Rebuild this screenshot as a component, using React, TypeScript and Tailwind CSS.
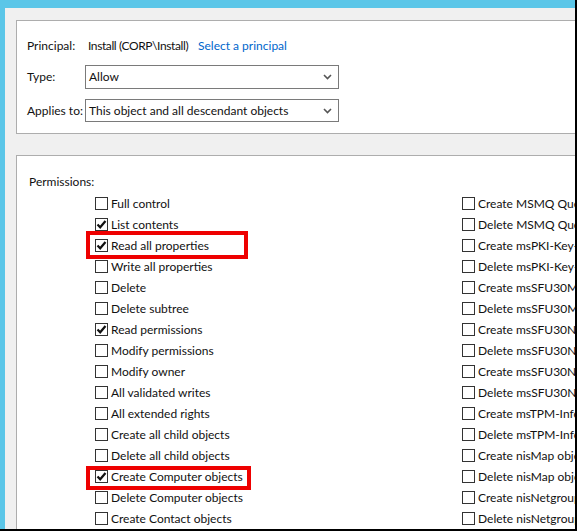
import React from "react";

const font = { fontFamily: 'Lato, "Noto Sans", sans-serif' };

function Check({ checked }: { checked?: boolean }) {
  return (
    <span className="w-[13px] h-[13px] border border-[#333333] bg-white flex items-center justify-center shrink-0">
      {checked && (
        <svg width="11" height="11" viewBox="0 0 11 11">
          <path d="M1.5 5.5 L4.2 8.3 L9.5 2" fill="none" stroke="#111" strokeWidth="2.2" />
        </svg>
      )}
    </span>
  );
}

function Chevron() {
  return (
    <svg width="9" height="6" viewBox="0 0 9 6" className="shrink-0">
      <path d="M1 1 L4.5 4.5 L8 1" fill="none" stroke="#555" strokeWidth="1.6" />
    </svg>
  );
}

const left: [string, boolean, string?][] = [
  ["Full control", false],
  ["List contents", true],
  ["Read all properties", true, "a"],
  ["Write all properties", false],
  ["Delete", false],
  ["Delete subtree", false],
  ["Read permissions", true],
  ["Modify permissions", false],
  ["Modify owner", false],
  ["All validated writes", false],
  ["All extended rights", false],
  ["Create all child objects", false],
  ["Delete all child objects", false],
  ["Create Computer objects", true, "b"],
  ["Delete Computer objects", false],
  ["Create Contact objects", false],
];

const right = [
  "Create MSMQ Queue Alias objects",
  "Delete MSMQ Queue Alias objects",
  "Create msPKI-Key-Recovery-Agent objects",
  "Delete msPKI-Key-Recovery-Agent objects",
  "Create msSFU30MailAliases objects",
  "Delete msSFU30MailAliases objects",
  "Create msSFU30NetId objects",
  "Delete msSFU30NetId objects",
  "Create msSFU30NetworkUser objects",
  "Delete msSFU30NetworkUser objects",
  "Create msTPM-InformationObjectsContainer objects",
  "Delete msTPM-InformationObjectsContainer objects",
  "Create nisMap objects",
  "Delete nisMap objects",
  "Create nisNetgroup objects",
  "Delete nisNetgroup objects",
];

export default function App() {
  return (
    <div
      className="w-[577px] h-[531px] bg-[#5bc6e8] border-r-2 border-b-2 border-black overflow-hidden text-[12px] text-[#111111]"
      style={font}
    >
      <div className="ml-[5px] mt-[8px] h-[523px] bg-[#f0f0f0] pl-[11px] pt-[12px] overflow-hidden">
        {/* Top panel */}
        <div className="h-[114px] bg-white border-l border-t border-b border-[#adadad] pl-[10px] pt-[17px] flex flex-col">
          <div className="flex items-center h-[16px] whitespace-nowrap">
            <span className="w-[61px] shrink-0">Principal:</span>
            <span className="w-[110px] shrink-0 tracking-[-0.4px]">Install (CORP\Install)</span>
            <span className="text-[#0066cc]">Select a principal</span>
          </div>
          <div className="flex items-center mt-[11px]">
            <span className="w-[58px] shrink-0 whitespace-nowrap">Type:</span>
            <div className="w-[254px] h-[24px] border border-[#7a7a7a] flex items-center justify-between pl-[3px] pr-[6px]">
              <span>Allow</span>
              <Chevron />
            </div>
          </div>
          <div className="flex items-center mt-[10px]">
            <span className="w-[58px] shrink-0 whitespace-nowrap">Applies to:</span>
            <div className="w-[254px] h-[23px] border border-[#7a7a7a] flex items-center justify-between pl-[3px] pr-[6px]">
              <span className="whitespace-nowrap">This object and all descendant objects</span>
              <Chevron />
            </div>
          </div>
        </div>

        {/* Permissions panel */}
        <div className="mt-[21px] h-[400px] bg-white border-l border-t border-[#adadad] pl-[12px] pt-[18px] overflow-hidden">
          <div className="h-[16px] flex items-center">Permissions:</div>
          <div className="mt-[3px] ml-[66px] grid grid-cols-[367px_300px]">
            <div className="flex flex-col">
              {left.map(([label, checked, mark]) => (
                <div key={label} className="relative h-[21px] flex items-center">
                  <Check checked={checked} />
                  <span className="ml-[3px] whitespace-nowrap">{label}</span>
                  {mark === "a" && (
                    <span className="absolute left-[-9px] top-[-4px] w-[162px] h-[28px] border-4 border-[#ee0000]" />
                  )}
                  {mark === "b" && (
                    <span className="absolute left-[-9px] top-[-0.5px] w-[165px] h-[24px] border-4 border-[#ee0000]" />
                  )}
                </div>
              ))}
            </div>
            <div className="flex flex-col">
              {right.map((label) => (
                <div key={label} className="h-[21px] flex items-center">
                  <Check />
                  <span className="ml-[3px] whitespace-nowrap">{label}</span>
                </div>
              ))}
            </div>
          </div>
        </div>
      </div>
    </div>
  );
}
